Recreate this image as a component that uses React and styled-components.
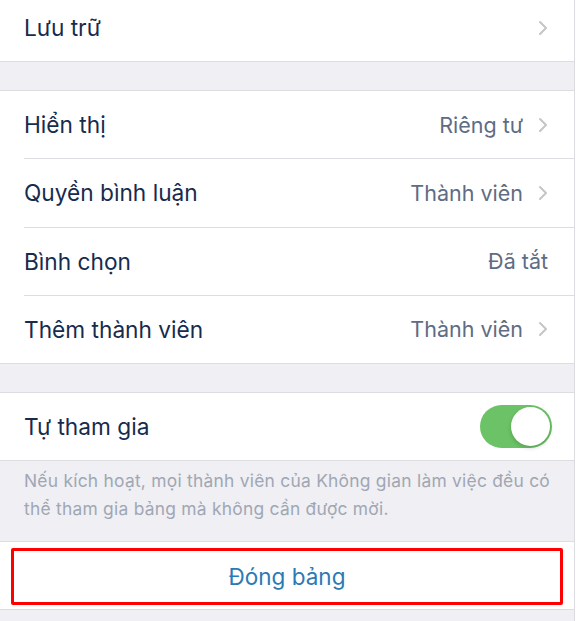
import React from "react";
import styled, { createGlobalStyle } from "styled-components";

const GlobalStyle = createGlobalStyle`
  html, body {
    margin: 0;
    padding: 0;
    background: #ffffff;
  }
  body {
    font-family: Inter, "Noto Sans", sans-serif;
    -webkit-font-smoothing: antialiased;
  }
`;

const Screen = styled.div`
  width: 574px;
  height: 621px;
  overflow: hidden;
  background: #efeff4;
  border-right: 1px solid #dcdce0;
`;

const Scroll = styled.div`
  margin-top: -7px;
`;

const Group = styled.div`
  background: #ffffff;
  border-top: 1px solid #dcdce1;
  border-bottom: 1px solid #dcdce1;
  margin-bottom: ${props => props.gap ?? 28}px;
`;

const Row = styled.div`
  display: flex;
  align-items: center;
  justify-content: space-between;
  height: 67.2px;
  padding: 0 26px 0 24px;
  box-sizing: border-box;
  position: relative;
  & + &::before {
    content: "";
    position: absolute;
    left: 24px;
    right: 0;
    top: -1px;
    height: 1px;
    background: #dcdce1;
  }
  & + & {
    margin-top: 1px;
  }
`;

const Label = styled.span`
  font-size: 22.7px;
  color: #172b4d;
`;

const Value = styled.span`
  display: flex;
  align-items: center;
  gap: 15px;
  font-size: 21.5px;
  color: #5e6c84;
`;

const Toggle = styled.div`
  width: 72px;
  height: 43px;
  margin-right: -4px;
  border-radius: 22px;
  background: ${props => (props.on ? "#6cc266" : "#e5e5ea")};
  display: flex;
  align-items: center;
  justify-content: ${props => (props.on ? "flex-end" : "flex-start")};
  padding: 0 2px;
  box-sizing: border-box;
`;

const Knob = styled.div`
  width: 39px;
  height: 39px;
  border-radius: 50%;
  background: #ffffff;
  box-shadow: 0 2px 4px rgba(0, 0, 0, 0.18);
`;

const Note = styled.p`
  margin: 0;
  padding: 6px 20px 18px 24px;
  font-size: 17.4px;
  letter-spacing: 0.25px;
  line-height: 28px;
  color: #a0a7b3;
`;

const ButtonRow = styled.div`
  height: 67px;
  box-sizing: border-box;
  padding: 6px 11px 4px 11px;
  display: flex;
`;

const CloseButton = styled.button`
  flex: 1;
  border: 3px solid #ff0000;
  border-radius: 2px;
  background: #ffffff;
  font-family: Inter, "Noto Sans", sans-serif;
  font-size: 22.5px;
  color: #2a7ab5;
  cursor: pointer;
`;

const Chevron = () => (
  <svg width="10" height="16" viewBox="0 0 10 16">
    <polyline
      points="2,2 8,8 2,14"
      fill="none"
      stroke="#c4c4c9"
      strokeWidth="2"
      strokeLinecap="round"
      strokeLinejoin="round"
    />
  </svg>
);

const settings = [
  { label: "Hiển thị", value: "Riêng tư", link: true },
  { label: "Quyền bình luận", value: "Thành viên", link: true },
  { label: "Bình chọn", value: "Đã tắt", link: false },
  { label: "Thêm thành viên", value: "Thành viên", link: true }
];

const App = () => (
  <Screen>
    <GlobalStyle />
    <Scroll>
      <Group>
        <Row>
          <Label>Lưu trữ</Label>
          <Value>
            <Chevron />
          </Value>
        </Row>
      </Group>

      <Group>
        {settings.map(item => (
          <Row key={item.label}>
            <Label>{item.label}</Label>
            <Value>
              {item.value}
              {item.link && <Chevron />}
            </Value>
          </Row>
        ))}
      </Group>

      <Group gap={0}>
        <Row>
          <Label>Tự tham gia</Label>
          <Toggle on>
            <Knob />
          </Toggle>
        </Row>
      </Group>
      <Note>
        Nếu kích hoạt, mọi thành viên của Không gian làm việc đều có thể tham
        gia bảng mà không cần được mời.
      </Note>

      <Group>
        <ButtonRow>
          <CloseButton>Đóng bảng</CloseButton>
        </ButtonRow>
      </Group>
    </Scroll>
  </Screen>
);

export default App;
